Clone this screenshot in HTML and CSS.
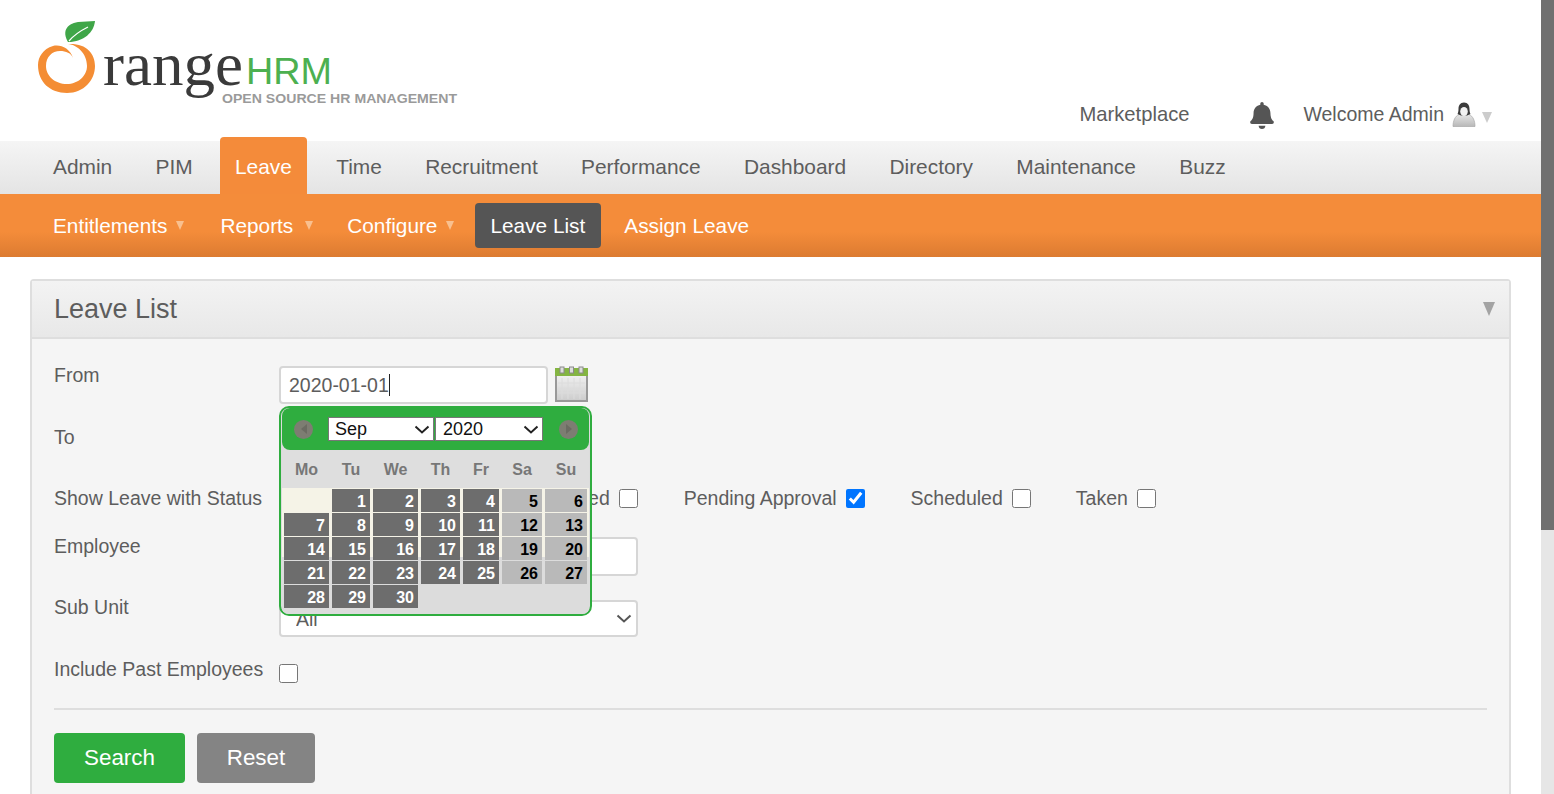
FILE: index.html
```html
<!DOCTYPE html>
<html>
<head>
	<title>Leave List</title>
	<link rel="stylesheet" href="styles.css">
</head>
<body>
	<div class="page">
		<div class="top-header">
			<svg class="logo" width="470" height="141" viewBox="0 0 470 141">
				<path fill="#f48d34" d="M73 58C70 48 60 44 53 46C43 49 38 57 38 65C38 82 50 93 67 93C84 93 95 80 95 66C95 53 86 43 68 44C78 45 87 54 87 66C87 76 78 84 67 84C55 84 46 76 46 66C46 57 52 51 60 51C66 51 71 53 73 58Z"/>
				<path fill="#3fa648" d="M68 42C62 32 66 24 78 22L95 21C94 32 84 42 68 42Z"/>
				<path stroke="#fff" stroke-width="1.2" fill="none" d="M69 41C74 35 80 31 88 27"/>
				<text class="logo-range" x="103" y="85" textLength="140" lengthAdjust="spacingAndGlyphs">range</text>
				<text class="logo-hrm" x="246" y="84" textLength="86" lengthAdjust="spacingAndGlyphs">HRM</text>
				<text class="logo-tag" x="222" y="103" textLength="235" lengthAdjust="spacingAndGlyphs">OPEN SOURCE HR MANAGEMENT</text>
			</svg>
			<div class="user-area">
				<a class="market">Marketplace</a>
				<svg class="bell" width="24" height="27" viewBox="0 0 448 512"><path fill="#555" d="M224 512c35.32 0 63.97-28.65 63.97-64H160.03c0 35.35 28.65 64 63.97 64zm215.39-149.71c-19.32-20.76-55.47-51.99-55.47-154.29 0-77.7-54.48-139.9-127.94-155.16V32c0-17.67-14.32-32-31.98-32s-31.98 14.33-31.98 32v20.84C118.56 68.1 64.08 130.3 64.08 208c0 102.3-36.15 133.53-55.47 154.29-6 6.45-8.66 14.16-8.61 21.71.11 16.4 12.98 32 32.1 32h383.8c19.12 0 32-15.6 32.1-32 .05-7.55-2.61-15.27-8.61-21.71z"/></svg>
				<span class="welcome">Welcome Admin</span>
				<svg class="user-icon" width="24" height="25" viewBox="0 0 24 25">
					<defs><linearGradient id="bodyGrad" x1="0" y1="0" x2="0" y2="1"><stop offset="0" stop-color="#e6e6e6"/><stop offset="1" stop-color="#b8b8b8"/></linearGradient></defs>
					<path fill="url(#bodyGrad)" stroke="#a8a8a8" stroke-width=".7" d="M1 24.5C1 19 3 14 7 12.5L17 12.5C21 14 23 19 23 24.5Z"/>
					<path fill="#3c3c3c" d="M12 0.5C8 0.5 6.5 3.5 6.5 7C6.5 9.5 6 11 5.5 12L9 13.5L15 13.5L18.5 12C18 11 17.5 9.5 17.5 7C17.5 3.5 16 0.5 12 0.5Z"/>
					<ellipse fill="#f2f2f2" cx="12" cy="9.5" rx="3.8" ry="4.6"/>
				</svg>
				<span class="arrow-down arrow-user"></span>
			</div>
		</div>

		<div class="main-nav">
			<a>Admin</a>
			<a>PIM</a>
			<a class="active">Leave</a>
			<a>Time</a>
			<a>Recruitment</a>
			<a>Performance</a>
			<a>Dashboard</a>
			<a>Directory</a>
			<a>Maintenance</a>
			<a>Buzz</a>
		</div>

		<div class="sub-nav">
			<a>Entitlements<span class="arrow-sub"></span></a>
			<a class="reports">Reports<span class="arrow-sub"></span></a>
			<a>Configure<span class="arrow-sub"></span></a>
			<a class="current">Leave List</a>
			<a>Assign Leave</a>
		</div>

		<div class="panel">
			<div class="panel-head">
				<h1>Leave List</h1>
				<span class="arrow-down arrow-panel"></span>
			</div>
			<div class="panel-body">
				<div class="form-row row-tall">
					<label>From</label>
					<div class="date-wrap">
						<div class="field">2020-01-01<span class="caret"></span></div>
						<svg class="cal-icon" width="34" height="36" viewBox="0 0 34 36">
							<defs><linearGradient id="calGrad" x1="0" y1="0" x2="0" y2="1"><stop offset="0" stop-color="#f6f6f6"/><stop offset="1" stop-color="#cccccc"/></linearGradient></defs>
							<rect x="1" y="5" width="31" height="30" fill="url(#calGrad)" stroke="#999" stroke-width="2"/>
							<rect x="0" y="2" width="33" height="8" fill="#84b542"/>
							<rect x="5" y="1" width="4" height="6" fill="#ddd" stroke="#8a8a8a"/>
							<rect x="14.5" y="1" width="4" height="6" fill="#ddd" stroke="#8a8a8a"/>
							<rect x="24" y="1" width="4" height="6" fill="#ddd" stroke="#8a8a8a"/>
							<path stroke="#dcdcdc" d="M7 12V33M13 12V33M19 12V33M25 12V33M3 17H30M3 22H30M3 27H30"/>
						</svg>
						<div class="calendar">
							<div class="cal-head">
								<span class="cal-btn"><span class="tri-left"></span></span>
								<span class="select-wrap cal-month">
									<select class="cal-select"><option>Sep</option></select>
									<svg class="chevron" width="16" height="9" viewBox="0 0 16 9"><path d="M1.5 1.5L8 7.5L14.500 1.500" fill="none" stroke="#222" stroke-width="2"/></svg>
								</span>
								<span class="select-wrap cal-year">
									<select class="cal-select"><option>2020</option></select>
									<svg class="chevron" width="16" height="9" viewBox="0 0 16 9"><path d="M1.5 1.5L8 7.5L14.500 1.500" fill="none" stroke="#222" stroke-width="2"/></svg>
								</span>
								<span class="cal-btn"><span class="tri-right"></span></span>
							</div>
							<div class="cal-grid cal-week">
								<span>Mo</span><span>Tu</span><span>We</span><span>Th</span><span>Fr</span><span>Sa</span><span>Su</span>
							</div>
							<div class="cal-grid cal-days">
								<span class="blank"></span><span>1</span><span>2</span><span>3</span><span>4</span><span class="off">5</span><span class="off">6</span>
								<span>7</span><span>8</span><span>9</span><span>10</span><span>11</span><span class="off">12</span><span class="off">13</span>
								<span>14</span><span>15</span><span>16</span><span>17</span><span>18</span><span class="off">19</span><span class="off">20</span>
								<span>21</span><span>22</span><span>23</span><span>24</span><span>25</span><span class="off">26</span><span class="off">27</span>
								<span>28</span><span>29</span><span>30</span>
							</div>
						</div>
					</div>
				</div>
				<div class="form-row">
					<label>To</label>
					<div class="field"></div>
				</div>
				<div class="form-row row-status">
					<label>Show Leave with Status</label>
					<div class="status-list">
						<span class="status">Cancelled<input type="checkbox"></span>
						<span class="status">Pending Approval<input type="checkbox" checked></span>
						<span class="status">Scheduled<input type="checkbox"></span>
						<span class="status status-last">Taken<input type="checkbox"></span>
					</div>
				</div>
				<div class="form-row">
					<label>Employee</label>
					<div class="field field-wide"></div>
				</div>
				<div class="form-row row-tall">
					<label>Sub Unit</label>
					<span class="select-wrap sub-wrap">
						<select class="sub-unit"><option>All</option></select>
						<svg class="chevron" width="16" height="9" viewBox="0 0 16 9"><path d="M1.5 1.5L8 7.5L14.500 1.500" fill="none" stroke="#555" stroke-width="2"/></svg>
					</span>
				</div>
				<div class="form-row row-past">
					<label>Include Past Employees</label>
					<input class="past-check" type="checkbox">
				</div>
				<div class="divider"></div>
				<div class="buttons">
					<button class="btn-search" type="button">Search</button>
					<button class="btn-reset" type="button">Reset</button>
				</div>
			</div>
		</div>
	</div>
	<div class="scrollbar"><div class="thumb"></div></div>
</body>
</html>
```

FILE: styles.css
```css
html, body{
	margin: 0;
	height: 794px;
	overflow: hidden;
	background: #fff;
}
body{
	font-family: "Liberation Sans", Arial, sans-serif;
	color: #5d5d5d;
}
.page{
	width: 1541px;
	height: 794px;
	overflow: hidden;
}
.scrollbar{
	position: fixed;
	top: 0;
	right: 0;
	width: 13px;
	height: 794px;
	background: #e6e6e6;
}
.thumb{
	height: 530px;
	background: #707070;
}

/* header */
.top-header{
	height: 141px;
	display: flex;
	justify-content: space-between;
}
.logo{
	display: block;
}
.logo-range{
	font-family: "Liberation Serif", serif;
	font-size: 62px;
	fill: #3a3a3a;
}
.logo-hrm{
	font-size: 37px;
	fill: #4cb050;
}
.logo-tag{
	font-weight: bold;
	font-size: 13.5px;
	fill: #9a9a9a;
}
.user-area{
	display: flex;
	align-items: flex-start;
	padding: 102px 49px 0 0;
	font-size: 20.2px;
}
.market{
	margin-right: 61px;
	line-height: 24px;
}
.bell{
	margin-right: 29px;
}
.welcome{
	font-size: 19.5px;
	line-height: 24px;
	margin-right: 8px;
}
.user-icon{
	margin-right: 6px;
}
.arrow-down{
	display: block;
	width: 0;
	height: 0;
	border-style: solid;
	border-color: #ccc transparent transparent transparent;
}
.arrow-user{
	margin-top: 10px;
	border-width: 11px 5.5px 0 5.5px;
}

/* menus */
.main-nav{
	height: 53px;
	padding-left: 38px;
	display: flex;
	gap: 13.3px;
	background: linear-gradient(#f5f5f5, #e4e4e4);
	font-size: 20.9px;
}
.main-nav a{
	padding: 0 15px;
	line-height: 52px;
}
.main-nav .active{
	margin: -4px 1px 0 -1px;
	height: 57px;
	line-height: 60px;
	background: #f48b3a;
	border-radius: 4px 4px 0 0;
	color: #fff;
}
.sub-nav{
	height: 63px;
	padding-left: 38px;
	display: flex;
	align-items: center;
	gap: 6px;
	background: linear-gradient(#f48c3a 60%, #dc7b31);
	font-size: 20.8px;
	color: #fff;
}
.sub-nav a{
	display: flex;
	align-items: center;
	height: 45px;
	padding: 0 15px;
	border-radius: 4px;
}
.sub-nav .reports{
	padding-right: 13px;
}
.sub-nav .reports .arrow-sub{
	margin-left: 12px;
}
.sub-nav .current{
	background: #555;
	padding-right: 16px;
	margin-right: 2px;
}
.arrow-sub{
	margin-left: 9px;
	width: 0;
	height: 0;
	border-style: solid;
	border-width: 9px 4.5px 0 4.5px;
	border-color: #f9c08f transparent transparent transparent;
}

/* panel */
.panel{
	margin: 22px 30px 0;
	border: 2px solid #dedede;
	border-radius: 4px;
	background: #f5f5f5;
	height: 600px;
}
.panel-head{
	height: 56px;
	padding: 0 14px 0 22px;
	display: flex;
	align-items: center;
	justify-content: space-between;
	background: linear-gradient(#f3f3f3, #e8e8e8);
	border-bottom: 2px solid #dedede;
}
.panel-head h1{
	margin: 0;
	font-size: 27px;
	font-weight: normal;
}
.arrow-panel{
	border-width: 14px 6.5px 0 6.5px;
	border-top-color: #a3a3a3;
}
.panel-body{
	padding: 27px 22px 0;
}
.form-row{
	display: flex;
	align-items: flex-start;
	height: 61px;
	font-size: 19.5px;
}
.row-tall{
	height: 62px;
}
.row-status{
	height: 48px;
}
.row-past{
	height: 48px;
}
.form-row label{
	flex: none;
	width: 225px;
	line-height: 19px;
}
.field{
	box-sizing: border-box;
	width: 269px;
	height: 38px;
	padding-left: 8px;
	border: 2px solid #d6d6d6;
	border-radius: 4px;
	background: #fff;
	line-height: 34px;
}
.field-wide{
	width: 359px;
	height: 39px;
}
.caret{
	display: inline-block;
	width: 1px;
	height: 22px;
	vertical-align: -4px;
	background: #222;
}
.date-wrap{
	position: relative;
	display: flex;
	gap: 7px;
}
.cal-icon{
	display: block;
}
.status-list{
	display: flex;
	gap: 46px;
	padding-left: 244px;
	line-height: 19px;
}
.status{
	display: flex;
	gap: 9px;
}
.status-last{
	margin-left: -1px;
}
.form-row input[type="checkbox"]{
	width: 19px;
	height: 19px;
	margin: 0;
}
.form-row input.past-check{
	margin-top: 4px;
}
.select-wrap{
	position: relative;
	display: block;
}
.chevron{
	position: absolute;
	top: 8px;
	right: 4px;
}
.sub-wrap{
	margin-top: 2px;
}
.sub-wrap .chevron{
	top: 14px;
	right: 6px;
}
.sub-unit{
	appearance: none;
	display: block;
	box-sizing: border-box;
	width: 359px;
	height: 37px;
	padding-left: 15px;
	border: 2px solid #d6d6d6;
	border-radius: 4px;
	background: #fff;
	font-family: inherit;
	font-size: 19.5px;
	color: #5d5d5d;
}
.divider{
	height: 2px;
	background: #dedede;
}
.buttons{
	display: flex;
	gap: 12px;
	margin-top: 23px;
}
.buttons button{
	height: 50px;
	border: none;
	border-radius: 4px;
	color: #fff;
	font-family: inherit;
	font-size: 22.4px;
}
.btn-search{
	width: 131px;
	background: #2fad3f;
}
.btn-reset{
	width: 118px;
	background: #848484;
}

/* date picker */
.calendar{
	position: absolute;
	z-index: 5;
	top: 40px;
	left: 0;
	box-sizing: border-box;
	width: 313px;
	height: 210px;
	border: 2px solid #2fad3f;
	border-radius: 10px;
	background: #dcdcdc;
	padding: 0 1px;
	overflow: hidden;
}
.cal-head{
	height: 42px;
	display: flex;
	align-items: center;
	padding-left: 12px;
	background: #2fad3f;
	border-radius: 8px;
}
.cal-btn{
	flex: none;
	width: 19px;
	height: 19px;
	border-radius: 50%;
	background: #7d7d72;
	display: flex;
	align-items: center;
	justify-content: center;
}
.tri-left, .tri-right{
	width: 0;
	height: 0;
	border-style: solid;
	border-width: 5px 6px;
	border-color: transparent;
}
.tri-left{
	border-right-color: #6b6b62;
	margin-left: -6px;
}
.tri-right{
	border-left-color: #6b6b62;
	margin-right: -6px;
}
.cal-select{
	appearance: none;
	display: block;
	box-sizing: border-box;
	width: 100%;
	height: 24px;
	border: 1px solid #777;
	border-radius: 0;
	background: #fff;
	color: #111;
	font-family: inherit;
	font-size: 18px;
	padding: 0 0 0 6px;
}
.cal-year .cal-select{
	padding-left: 7px;
}
.cal-month{
	width: 106px;
	margin-left: 15px;
}
.cal-year{
	width: 108px;
	margin: 0 16px 0 1px;
}
.cal-grid{
	display: grid;
	grid-template-columns: 45px 38px 45px 39px 36px 40px 42px;
	column-gap: 3px;
	padding-left: 2px;
}
.cal-week{
	box-sizing: border-box;
	height: 38px;
	padding-top: 2px;
	align-items: center;
	background: #dedede;
	font-size: 16px;
	font-weight: bold;
	color: #777;
	text-align: center;
}
.cal-days{
	row-gap: 1px;
	padding-top: 1px;
	padding-bottom: 6px;
	background: linear-gradient(#f5f3e7 69px, #dcdcdc 69px);
	font-size: 16px;
	font-weight: bold;
}
.cal-days span{
	height: 23px;
	line-height: 25px;
	padding-right: 4px;
	text-align: right;
	background: #6d6d6d;
	color: #fff;
}
.cal-days .off{
	background: #b9b9b9;
	color: #000;
}
.cal-days .blank{
	background: #f5f3e7;
}
```
